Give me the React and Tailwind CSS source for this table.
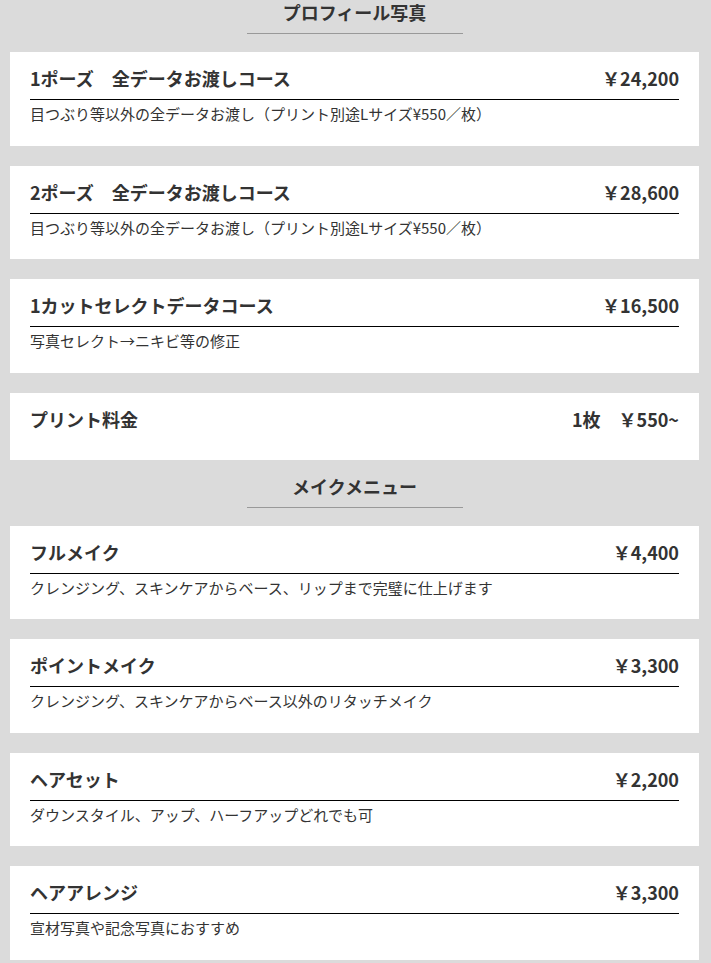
const profile = [
  {
    title: '1ポーズ　全データお渡しコース',
    price: '￥24,200',
    note: '目つぶり等以外の全データお渡し（プリント別途Lサイズ¥550／枚）',
  },
  {
    title: '2ポーズ　全データお渡しコース',
    price: '￥28,600',
    note: '目つぶり等以外の全データお渡し（プリント別途Lサイズ¥550／枚）',
  },
  {
    title: '1カットセレクトデータコース',
    price: '￥16,500',
    note: '写真セレクト→ニキビ等の修正',
  },
  {
    title: 'プリント料金',
    price: '1枚　￥550~',
  },
];

const makeup = [
  {
    title: 'フルメイク',
    price: '￥4,400',
    note: 'クレンジング、スキンケアからベース、リップまで完璧に仕上げます',
  },
  {
    title: 'ポイントメイク',
    price: '￥3,300',
    note: 'クレンジング、スキンケアからベース以外のリタッチメイク',
  },
  {
    title: 'ヘアセット',
    price: '￥2,200',
    note: 'ダウンスタイル、アップ、ハーフアップどれでも可',
  },
  {
    title: 'ヘアアレンジ',
    price: '￥3,300',
    note: '宣材写真や記念写真におすすめ',
  },
];

function Heading({ children }) {
  return (
    <div className="flex flex-col items-center">
      <h2 className="text-[18px] leading-[24px] font-bold text-[#333]">{children}</h2>
      <div className="mt-[9px] h-px w-[216px] bg-[#999]" />
    </div>
  );
}

function PriceCard({ title, price, note }) {
  return (
    <div className="bg-white px-[20px] pt-[13px] pb-[20px]">
      {/* Title row */}
      <div
        className={`flex items-center justify-between ${
          note ? 'pb-[7px] border-b border-black' : 'pb-[7px]'
        }`}
      >
        <h3 className="text-[18px] leading-[27px] font-bold">{title}</h3>
        <span className="text-[18px] leading-[27px] font-bold">{price}</span>
      </div>
      {note && <p className="mt-[3px] text-[15px] leading-[1.5]">{note}</p>}
    </div>
  );
}

function Section({ title, items }) {
  return (
    <section>
      <Heading>{title}</Heading>
      <div className="mt-[18px] flex flex-col gap-[20px]">
        {items.map((item) => (
          <PriceCard key={item.title} {...item} />
        ))}
      </div>
    </section>
  );
}

export default function App() {
  return (
    <div
      className="min-h-screen bg-[#dbdbdb] text-[#333]"
      style={{ fontFamily: '"Noto Sans CJK JP", "Noto Sans", sans-serif' }}
    >
      <div className="ml-[10px] w-[689px] flex flex-col gap-[14px]">
        <Section title="プロフィール写真" items={profile} />
        <Section title="メイクメニュー" items={makeup} />
      </div>
    </div>
  );
}
